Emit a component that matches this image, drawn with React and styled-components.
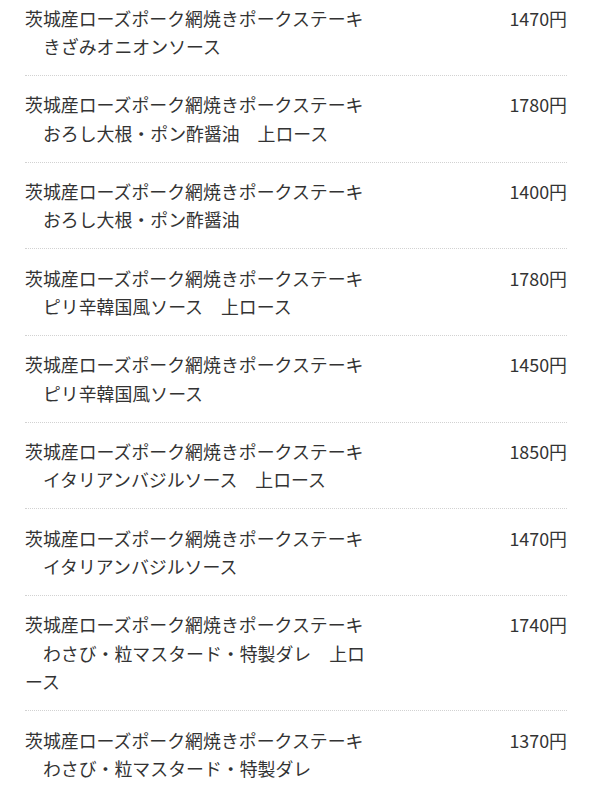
import React from "react";
import styled, { createGlobalStyle } from "styled-components";

const GlobalStyle = createGlobalStyle`
  html, body {
    margin: 0;
    padding: 0;
    background: #ffffff;
  }
  body {
    font-family: "Noto Sans CJK JP", "Noto Sans", sans-serif;
    color: #333333;
  }
`;

const List = styled.ul`
  list-style: none;
  margin: 0;
  padding: 0 26px 0 25px;
`;

const Item = styled.li`
  display: flex;
  justify-content: space-between;
  align-items: flex-start;
  padding: 14.35px 0 14.35px;
  border-top: 1px dotted #d2d2d2;
  font-size: 17.9px;
  line-height: 28.5px;

  &:first-child {
    border-top: none;
    padding-top: 3.5px;
  }
`;

const Name = styled.div`
  width: 350px;
  white-space: pre-wrap;
  word-break: break-all;
`;

const Price = styled.div`
  text-align: right;
  white-space: nowrap;
`;

const base = "茨城産ローズポーク網焼きポークステーキ";

const items = [
  { sub: "きざみオニオンソース", price: 1470 },
  { sub: "おろし大根・ポン酢醤油　上ロース", price: 1780 },
  { sub: "おろし大根・ポン酢醤油", price: 1400 },
  { sub: "ピリ辛韓国風ソース　上ロース", price: 1780 },
  { sub: "ピリ辛韓国風ソース", price: 1450 },
  { sub: "イタリアンバジルソース　上ロース", price: 1850 },
  { sub: "イタリアンバジルソース", price: 1470 },
  { sub: "わさび・粒マスタード・特製ダレ　上ロース", price: 1740 },
  { sub: "わさび・粒マスタード・特製ダレ", price: 1370 },
];

export default function App() {
  return (
    <>
      <GlobalStyle />
      <List>
        {items.map((it, i) => (
          <Item key={i}>
            <Name>
              {base}
              <br />
              {"　" + it.sub}
            </Name>
            <Price>{it.price}円</Price>
          </Item>
        ))}
      </List>
    </>
  );
}
